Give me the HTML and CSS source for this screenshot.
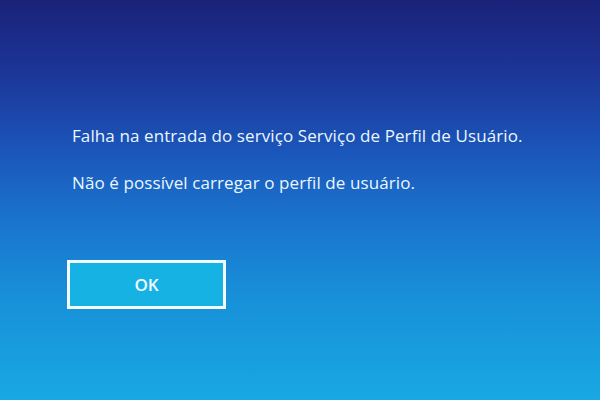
FILE: index.html
```html
<!DOCTYPE html>
<html lang="pt-BR">
<head>
<meta charset="utf-8">
<title>Erro</title>
<link rel="stylesheet" href="styles.css">
</head>
<body>
<main class="screen">
  <section class="dialog">
    <p class="msg">Falha na entrada do serviço Serviço de Perfil de Usuário.</p>
    <p class="msg">Não é possível carregar o perfil de usuário.</p>
    <button class="ok" type="button">OK</button>
  </section>
</main>
</body>
</html>
```
FILE: styles.css
```css
html, body {
  margin: 0;
  padding: 0;
  width: 600px;
  height: 400px;
  overflow: hidden;
}
.screen {
  width: 600px;
  height: 400px;
  box-sizing: border-box;
  background: linear-gradient(180deg, #1a2278 0%, #1c3598 18%, #1b56ba 38%, #1a74cd 55%, #1891d9 75%, #18a8e3 100%);
  padding: 124px 0 0 72px;
  font-family: "Open Sans", "Noto Sans", sans-serif;
  color: #eaf7ff;
}
.dialog {
  display: flex;
  flex-direction: column;
  align-items: flex-start;
}
.msg {
  margin: 0 0 23px 0;
  font-size: 17px;
  font-weight: 500;
  letter-spacing: 0.1px;
  line-height: 24px;
}
.ok {
  margin: 42px 0 0 -5px;
  width: 159px;
  height: 49px;
  border: 3px solid #f2fbff;
  background: #17b2e4;
  color: #f2fbff;
  font-family: "Open Sans", "Noto Sans", sans-serif;
  font-size: 17px;
  font-weight: 600;
  padding: 0;
}
```
